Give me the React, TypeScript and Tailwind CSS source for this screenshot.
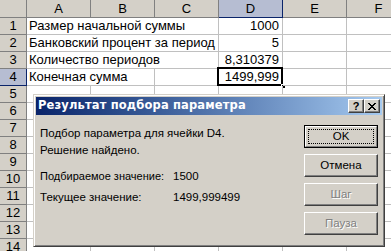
import React from "react";

const cellFont = { fontFamily: '"Liberation Sans", Arial, sans-serif' };
const dlgFont = { fontFamily: '"Liberation Sans", Arial, sans-serif' };
const titleFont = { fontFamily: '"DejaVu Sans", "Liberation Sans", sans-serif' };

type Cell = { w: number; text?: string; align?: "left" | "right"; sel?: boolean };

const rows: Cell[][] = [
  [{ w: 192, text: "Размер начальной суммы" }, { w: 64, text: "1000", align: "right" }, { w: 64 }, { w: 64 }],
  [{ w: 192, text: "Банковский процент за период" }, { w: 64, text: "5", align: "right" }, { w: 64 }, { w: 64 }],
  [{ w: 192, text: "Количество периодов" }, { w: 64, text: "8,310379", align: "right" }, { w: 64 }, { w: 64 }],
  [{ w: 128, text: "Конечная сумма" }, { w: 64 }, { w: 64, text: "1499,999", align: "right", sel: true }, { w: 64 }, { w: 64 }],
];

const emptyRow: Cell[] = [{ w: 64 }, { w: 64 }, { w: 64 }, { w: 64 }, { w: 64 }, { w: 64 }];

function Btn({ label, disabled, def }: { label: string; disabled?: boolean; def?: boolean }) {
  if (def) {
    return (
      <div className="w-[74px] h-[23px] border border-black">
        <div className="w-full h-full border-t border-l border-t-white border-l-white border-r border-b border-r-[#808080] border-b-[#808080] flex items-center justify-center p-[2px]">
          <div className="w-full h-full border border-dotted border-black flex items-center justify-center text-[11.5px] text-black">
            {label}
          </div>
        </div>
      </div>
    );
  }
  return (
    <div className="w-[74px] h-[23px] border-t border-l border-t-white border-l-white border-r border-b border-r-[#404040] border-b-[#404040] shadow-[inset_-1px_-1px_0_#808080] flex items-center justify-center text-[11.5px]">
      {disabled ? (
        <span className="text-[#808080] [text-shadow:1px_1px_0_#ffffff]">{label}</span>
      ) : (
        <span className="text-black">{label}</span>
      )}
    </div>
  );
}

export default function App() {
  return (
    <div className="relative w-[391px] h-[251px] overflow-hidden bg-white" style={cellFont}>
      {/* header row */}
      <div className="flex h-[18px]">
        <div className="w-[27px] shrink-0 bg-[#d4d0c8] border-r border-b border-[#808080]" />
        {["A", "B", "C", "D", "E", "F"].map((c) => (
          <div
            key={c}
            className={
              "w-[64px] shrink-0 border-r border-b flex items-center justify-center text-[13px] text-black " +
              (c === "D" ? "bg-[#b6bdd2] border-[#0a246a]" : "bg-[#d4d0c8] border-[#808080]")
            }
          >
            {c}
          </div>
        ))}
      </div>
      {Array.from({ length: 14 }).map((_, i) => {
        const cells = i < 4 ? rows[i] : emptyRow;
        const isSel = i === 3;
        return (
          <div key={i} className="flex h-[17px]">
            <div
              className={
                "w-[27px] shrink-0 border-r border-b flex items-center justify-center text-[13px] text-black " +
                (isSel ? "bg-[#b6bdd2] border-[#0a246a]" : "bg-[#d4d0c8] border-[#808080]")
              }
            >
              {i + 1}
            </div>
            {cells.map((c, j) => (
              <div
                key={j}
                style={{ width: c.w }}
                className={
                  "relative shrink-0 border-r border-b border-[#c0c0c0] flex items-center text-[13px] text-black whitespace-nowrap " +
                  (c.align === "right" ? "justify-end pr-[3px]" : "pl-[2px]")
                }
              >
                {c.text}
                {c.sel && (
                  <>
                    <div className="absolute left-[-2px] top-[-2px] right-[-1px] bottom-[-1px] border-2 border-black" />
                    <div className="absolute right-[-4px] bottom-[-4px] w-[5px] h-[5px] bg-black border border-white" />
                  </>
                )}
              </div>
            ))}
          </div>
        );
      })}

      {/* dialog */}
      <div
        className="absolute left-[33px] top-[94px] w-[352px] h-[153px] bg-[#d4d0c8] border border-t-[#d4d0c8] border-l-[#d4d0c8] border-r-[#404040] border-b-[#404040] shadow-[inset_1px_1px_0_#ffffff,inset_-1px_-1px_0_#808080] p-[2px] flex flex-col"
        style={dlgFont}
      >
        <div className="h-[18px] shrink-0 flex items-center bg-gradient-to-r from-[#0a246a] to-[#a6caf0] pl-[2px] pr-[2px]">
          <span className="text-white font-bold text-[11.5px] tracking-[0.15px] flex-1" style={titleFont}>
            Результат подбора параметра
          </span>
          <div className="flex">
            <div className="w-[16px] h-[14px] bg-[#d4d0c8] border-t border-l border-t-white border-l-white border-r border-b border-r-[#404040] border-b-[#404040] shadow-[inset_-1px_-1px_0_#808080] flex items-center justify-center">
              <span className="text-black font-bold text-[11px] leading-none">?</span>
            </div>
            <div className="w-[16px] h-[14px] bg-[#d4d0c8] border-t border-l border-t-white border-l-white border-r border-b border-r-[#404040] border-b-[#404040] shadow-[inset_-1px_-1px_0_#808080] flex items-center justify-center">
              <svg width="8" height="7" viewBox="0 0 8 7" shapeRendering="crispEdges">
                <path d="M0 0h2v1h-2zM6 0h2v1h-2zM1 1h2v1h-2zM5 1h2v1h-2zM2 2h4v1h-4zM3 3h2v1h-2zM2 4h4v1h-4zM1 5h2v1h-2zM5 5h2v1h-2zM0 6h2v1h-2zM6 6h2v1h-2z" fill="#000" />
              </svg>
            </div>
          </div>
        </div>
        <div className="flex flex-1 pl-[4px] pr-[4px]">
          <div className="flex-1 text-[11.5px] leading-[13px] text-black">
            <div className="mt-[12px]">Подбор параметра для ячейки D4.</div>
            <div className="mt-[4px]">Решение найдено.</div>
            <div className="mt-[13px] grid grid-cols-[133px_auto]">
              <div className="text-[11px]">Подбираемое значение:</div>
              <div>1500</div>
            </div>
            <div className="mt-[8px] grid grid-cols-[133px_auto]">
              <div>Текущее значение:</div>
              <div>1499,999499</div>
            </div>
          </div>
          <div className="flex flex-col gap-[6px] pt-[10px]">
            <Btn label="OK" def />
            <Btn label="Отмена" />
            <Btn label="Шаг" disabled />
            <Btn label="Пауза" disabled />
          </div>
        </div>
      </div>
    </div>
  );
}
